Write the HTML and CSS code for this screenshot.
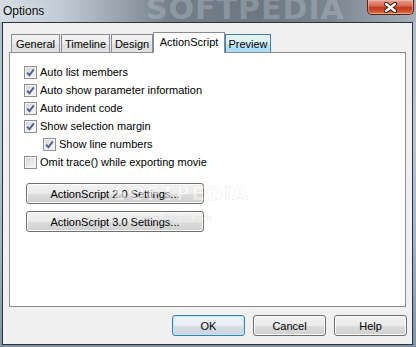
FILE: index.html
```html
<!DOCTYPE html>
<html>
<head>
<meta charset="utf-8">
<title>Options</title>
<link rel="stylesheet" href="styles.css">
</head>
<body>
<div class="window">
  <div class="titlebar">
    <span class="title">Options</span>
    <span class="wm-title">SOFTPEDIA</span>
    <div class="close">
      <svg width="15" height="11" viewBox="0 0 15 11">
        <path d="M3 2 L12 9 M12 2 L3 9" stroke="#3a1a14" stroke-width="4.2" stroke-linecap="round" fill="none"/>
        <path d="M3 2 L12 9 M12 2 L3 9" stroke="#ffffff" stroke-width="2.4" stroke-linecap="round" fill="none"/>
      </svg>
    </div>
  </div>
  <div class="client">
    <div class="tabs">
      <div class="tab t-general">General</div>
      <div class="tab t-timeline">Timeline</div>
      <div class="tab t-design">Design</div>
      <div class="tab selected t-as">ActionScript</div>
      <div class="tab hover t-preview">Preview</div>
    </div>
    <div class="panel">
      <div class="row"><span class="cb"><svg class="chk" width="11" height="11" viewBox="0 0 11 11"><path d="M2.2 5.6 L4.4 8.2 L8.8 2.4" stroke="#4a5f93" stroke-width="1.9" fill="none"/></svg></span><span>Auto list members</span></div>
      <div class="row"><span class="cb"><svg class="chk" width="11" height="11" viewBox="0 0 11 11"><path d="M2.2 5.6 L4.4 8.2 L8.8 2.4" stroke="#4a5f93" stroke-width="1.9" fill="none"/></svg></span><span>Auto show parameter information</span></div>
      <div class="row"><span class="cb"><svg class="chk" width="11" height="11" viewBox="0 0 11 11"><path d="M2.2 5.6 L4.4 8.2 L8.8 2.4" stroke="#4a5f93" stroke-width="1.9" fill="none"/></svg></span><span>Auto indent code</span></div>
      <div class="row"><span class="cb"><svg class="chk" width="11" height="11" viewBox="0 0 11 11"><path d="M2.2 5.6 L4.4 8.2 L8.8 2.4" stroke="#4a5f93" stroke-width="1.9" fill="none"/></svg></span><span>Show selection margin</span></div>
      <div class="row indent"><span class="cb"><svg class="chk" width="11" height="11" viewBox="0 0 11 11"><path d="M2.2 5.6 L4.4 8.2 L8.8 2.4" stroke="#4a5f93" stroke-width="1.9" fill="none"/></svg></span><span>Show line numbers</span></div>
      <div class="row"><span class="cb"></span><span>Omit trace() while exporting movie</span></div>
      <div class="settings">
        <button class="btn wide">ActionScript 2.0 Settings...</button>
        <button class="btn wide">ActionScript 3.0 Settings...</button>
      </div>
      <span class="wm-panel">SOFTPEDIA</span>
      <span class="wm-url">www.softpedia.com</span>
    </div>
    <div class="footer">
      <button class="btn foot default">OK</button>
      <button class="btn foot">Cancel</button>
      <button class="btn foot">Help</button>
    </div>
  </div>
</div>
</body>
</html>
```
FILE: styles.css
```css
html, body {
  margin: 0;
  padding: 0;
}
body {
  width: 416px;
  height: 347px;
  overflow: hidden;
  font-family: "Liberation Sans", Arial, sans-serif;
  font-size: 11px;
  color: #000;
}
.window {
  width: 416px;
  height: 347px;
  box-sizing: border-box;
  background: linear-gradient(180deg, #aebdcb 0%, #b7c6d4 40%, #9fb4c8 70%, #7f93a8 100%);
  display: flex;
  flex-direction: column;
}
.titlebar {
  position: relative;
  height: 22px;
  display: flex;
  align-items: flex-start;
  background: linear-gradient(90deg, #d3dbe3 0%, #c2ccd6 60px, #98a3ae 120px, #747f8a 170px, #6c7782 260px, #7a858f 330px, #8f99a3 370px, #a4aeb8 416px);
  overflow: hidden;
}
.title {
  font-size: 12px;
  padding: 4px 0 0 3px;
  color: #0b0b0b;
  text-shadow: 0 0 6px rgba(255,255,255,0.8);
  position: relative;
  z-index: 1;
}
.wm-title {
  position: absolute;
  left: 146px;
  top: -9px;
  font-family: "DejaVu Sans", sans-serif;
  font-weight: bold;
  font-size: 30px;
  letter-spacing: 1px;
  color: rgba(210, 218, 226, 0.3);
}
.close {
  margin-left: auto;
  margin-right: 2px;
  width: 47px;
  height: 15px;
  box-sizing: border-box;
  border: 1px solid #5b2419;
  border-top: none;
  border-radius: 0 0 5px 5px;
  background: linear-gradient(180deg, #e4a091 0%, #d86c55 40%, #c4391d 55%, #cf5a32 85%, #e0904e 100%);
  box-shadow: inset 0 0 0 1px rgba(255,210,200,0.45);
  display: flex;
  align-items: center;
  justify-content: center;
  position: relative;
  z-index: 1;
}
.client {
  margin-left: 2px;
  width: 411px;
  height: 323px;
  box-sizing: border-box;
  border: 1px solid #2f3438;
  background: #f0f0f0;
  padding: 9px 6px 0 6px;
  display: flex;
  flex-direction: column;
}
.tabs {
  height: 20px;
  display: flex;
  align-items: flex-end;
  padding-left: 2px;
  position: relative;
  z-index: 2;
}
.tab {
  box-sizing: border-box;
  height: 18px;
  border: 1px solid #898c95;
  border-bottom: none;
  background: linear-gradient(180deg, #f3f3f3 0%, #ebebeb 50%, #dedede 51%, #e3e3e3 100%);
  display: flex;
  align-items: center;
  justify-content: center;
  padding-top: 1px;
}
.t-general { width: 49px; margin-right: 1px; }
.t-timeline { width: 49px; margin-right: 1px; }
.t-design { width: 42px; }
.t-as { width: 72px; }
.t-preview { width: 46px; }
.tab.selected {
  height: 21px;
  margin-bottom: -1px;
  background: #ffffff;
  padding-top: 0;
  padding-bottom: 2px;
}
.tab.hover {
  border-color: #3c7fb1;
  background: linear-gradient(180deg, #eaf6fd 0%, #d9f0fc 50%, #bee6fd 51%, #a7d9f5 100%);
}
.panel {
  position: relative;
  height: 255px;
  box-sizing: border-box;
  border: 1px solid #898c95;
  background: #ffffff;
  padding: 10px 14px 0 14px;
  overflow: hidden;
}
.row {
  height: 18px;
  display: flex;
  align-items: center;
  gap: 3px;
}
.row.indent {
  padding-left: 19px;
}
.cb {
  width: 13px;
  height: 13px;
  box-sizing: border-box;
  border: 1px solid #8e8f8f;
  background: linear-gradient(135deg, #cfd2d6 0%, #e6e7e9 50%, #fbfbfb 100%);
  box-shadow: inset 0 0 0 1px #f4f4f4;
  display: flex;
  align-items: center;
  justify-content: center;
  flex: none;
}
.chk {
  display: block;
}
.settings {
  margin-top: 12px;
  margin-left: 2px;
  display: flex;
  flex-direction: column;
  gap: 7px;
}
.btn {
  font-family: "Liberation Sans", Arial, sans-serif;
  font-size: 11px;
  color: #000;
  height: 21px;
  box-sizing: border-box;
  border: 1px solid #707070;
  border-radius: 3px;
  background: linear-gradient(180deg, #f2f2f2 0%, #ebebeb 50%, #dddddd 51%, #cfcfcf 100%);
  box-shadow: inset 0 0 0 1px #fbfbfb;
  padding: 0;
  margin: 0;
}
.btn.wide {
  width: 178px;
}
.wm-panel {
  position: absolute;
  left: 103px;
  top: 128px;
  font-family: "DejaVu Sans", sans-serif;
  font-weight: bold;
  font-size: 20px;
  letter-spacing: 1px;
  color: rgba(255, 255, 255, 0.55);
  -webkit-text-stroke: 0.6px rgba(200, 200, 200, 0.35);
  pointer-events: none;
}
.wm-url {
  position: absolute;
  left: 124px;
  top: 160px;
  font-size: 9px;
  color: rgba(210, 210, 210, 0.5);
  pointer-events: none;
}
.footer {
  margin-top: 8px;
  margin-right: -1px;
  display: flex;
  justify-content: flex-end;
  gap: 8px;
}
.btn.foot {
  width: 73px;
  height: 21px;
}
.btn.default {
  border-color: #3c7fb1;
  box-shadow: inset 0 0 0 1px #bfe5f8;
  background: linear-gradient(180deg, #f0f4f7 0%, #e7edf1 50%, #d6dfe5 51%, #cbd5dc 100%);
}
```
